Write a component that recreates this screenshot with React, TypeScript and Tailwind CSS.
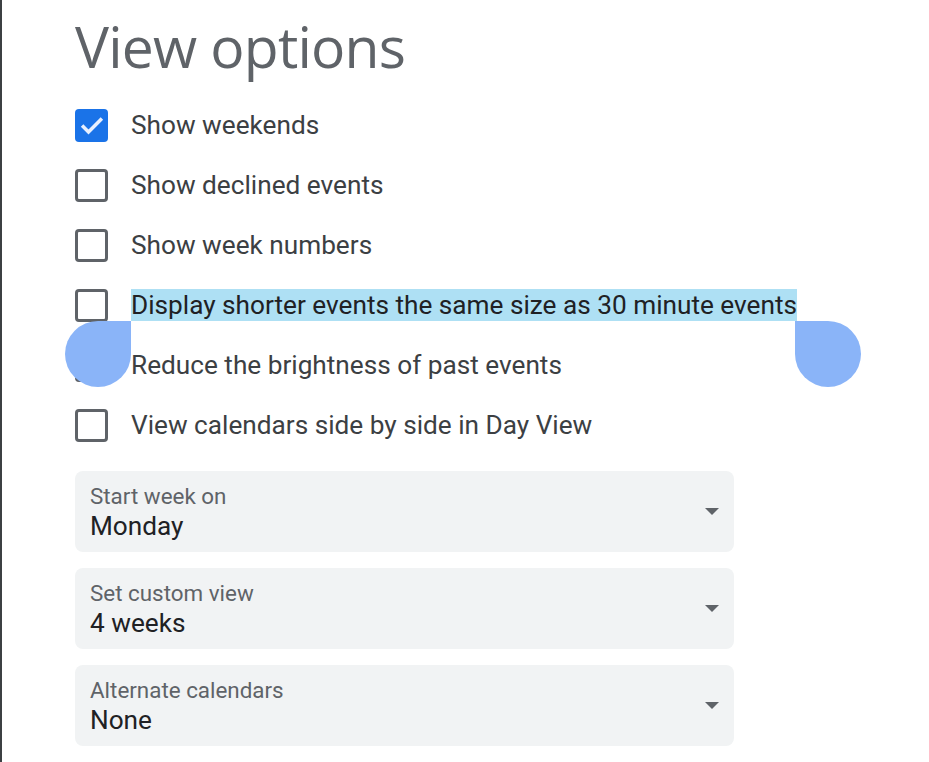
import React from 'react';

const options = [
  { label: 'Show weekends', checked: true },
  { label: 'Show declined events', checked: false },
  { label: 'Show week numbers', checked: false },
  { label: 'Display shorter events the same size as 30 minute events', checked: false, selected: true },
  { label: 'Reduce the brightness of past events', checked: false },
  { label: 'View calendars side by side in Day View', checked: false },
];

const selects = [
  { label: 'Start week on', value: 'Monday' },
  { label: 'Set custom view', value: '4 weeks' },
  { label: 'Alternate calendars', value: 'None' },
];

function Checkbox({ checked }: { checked: boolean }) {
  if (checked) {
    return (
      <div className="w-[33px] h-[33px] rounded-[4px] bg-[#1a73e8] flex items-center justify-center shrink-0">
        <svg width="28" height="28" viewBox="0 0 24 24" fill="none">
          <path d="M3.5 12.5l5.5 5.5L20.5 6.5" stroke="#e8f0fe" strokeWidth="3" />
        </svg>
      </div>
    );
  }
  return <div className="w-[33px] h-[33px] rounded-[4px] border-[3px] border-[#5f6368] shrink-0" />;
}

export default function App() {
  return (
    <div className="min-h-screen w-full bg-white border-l-2 border-[#3c4043] pl-[73px] font-['Roboto',sans-serif]">
      <h1 className="pt-[18px] mb-[20px] text-[57px] leading-none text-[#5f6368] font-['Open_Sans',sans-serif] tracking-[-0.8px]">
        View options
      </h1>

      <ul>
        {options.map((o) => (
          <li key={o.label} className="h-[60px] flex items-center gap-[23px]">
            <Checkbox checked={o.checked} />
            {o.selected ? (
              <span className="relative inline-block h-[32px] leading-[32px] bg-[#aee0f4] text-[26.2px] text-[#202124]">
                {o.label}
                <span className="absolute left-[-66px] top-full w-[66px] h-[66px] rounded-full rounded-tr-none bg-[#8ab4f8]" />
                <span className="absolute right-[-64px] top-full w-[66px] h-[66px] rounded-full rounded-tl-none bg-[#8ab4f8]" />
              </span>
            ) : (
              <span className="text-[26.2px] leading-[32px] text-[#3c4043]">{o.label}</span>
            )}
          </li>
        ))}
      </ul>

      <div className="mt-[16px] w-[659px] flex flex-col gap-[16px]">
        {selects.map((s) => (
          <div key={s.label} className="h-[81px] rounded-[8px] bg-[#f1f3f4] pl-[15px] pr-[15px] flex items-center">
            <div className="flex-1 flex flex-col">
              <span className="text-[22.4px] leading-[28px] text-[#5f6368]">{s.label}</span>
              <span className="text-[26.2px] leading-[32px] text-[#202124]">{s.value}</span>
            </div>
            <svg width="14" height="7" viewBox="0 0 14 7">
              <path d="M0 0h14L7 7z" fill="#5f6368" />
            </svg>
          </div>
        ))}
      </div>
    </div>
  );
}
